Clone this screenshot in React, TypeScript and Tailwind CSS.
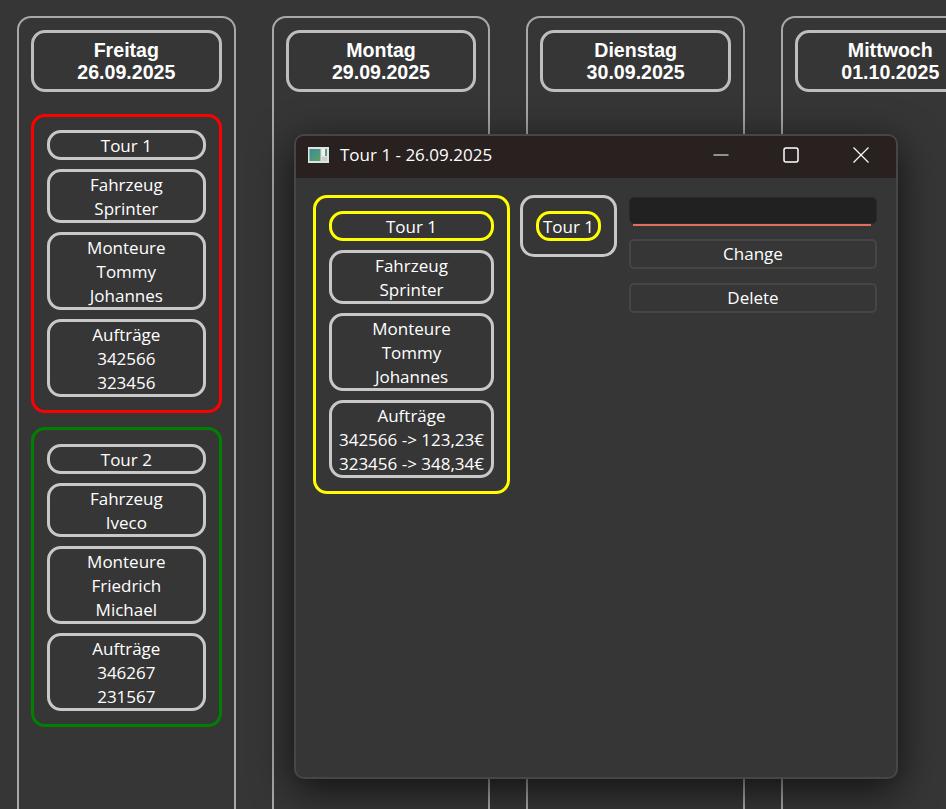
import React from 'react';

const bodyFont = "font-['Open_Sans','Noto_Sans',sans-serif]";

interface TourBoxProps {
  lines: string[];
  accent?: boolean;
  className?: string;
}

const TourBox: React.FC<TourBoxProps> = ({ lines, accent, className = '' }) => (
  <div
    className={`rounded-[14px] border-[3px] text-center text-[17px] leading-[24px] text-white ${accent ? 'border-[#ffff00]' : 'border-[#c8c8c8]'} ${className}`}
  >
    {lines.map((line, idx) => (
      <div key={idx} className="translate-y-[1px] whitespace-nowrap">{line}</div>
    ))}
  </div>
);

interface TourCardProps {
  borderClass: string;
  name: string;
  vehicle: string;
  crew: string[];
  orders: string[];
  accentName?: boolean;
  className?: string;
}

const TourCard: React.FC<TourCardProps> = ({ borderClass, name, vehicle, crew, orders, accentName, className = '' }) => (
  <div className={`flex flex-col gap-[9px] rounded-[14px] border-[3px] p-[13px] ${borderClass} ${className}`}>
    <TourBox lines={[name]} accent={accentName} />
    <TourBox lines={['Fahrzeug', vehicle]} />
    <TourBox lines={['Monteure', ...crew]} />
    <TourBox lines={['Aufträge', ...orders]} />
  </div>
);

interface DayColumnProps {
  day: string;
  date: string;
  children?: React.ReactNode;
}

const DayColumn: React.FC<DayColumnProps> = ({ day, date, children }) => (
  <div className="flex h-[830px] w-[218.67px] shrink-0 flex-col gap-[22px] rounded-[14px] border-2 border-[#a8a8a8] px-[12px] pt-[12px]">
    <div className="flex h-[62px] shrink-0 flex-col items-center justify-center rounded-[14px] border-[3px] border-[#bebebe] font-['Liberation_Sans',sans-serif] text-[19.6px] leading-[22px] font-bold text-white">
      <div>{day}</div>
      <div>{date}</div>
    </div>
    <div className="flex flex-col gap-[14px]">{children}</div>
  </div>
);

const WindowIcon = () => (
  <svg width="22" height="17" viewBox="0 0 22 17" className="shrink-0">
    <defs>
      <linearGradient id="pane" x1="0" y1="0" x2="1" y2="1">
        <stop offset="0" stopColor="#3d8a94" />
        <stop offset="1" stopColor="#5da06a" />
      </linearGradient>
    </defs>
    <rect x="0" y="0" width="21" height="16" fill="#dfe3e3" />
    <rect x="1.5" y="2" width="11" height="12" fill="url(#pane)" />
    <rect x="14" y="2" width="5" height="7" fill="#f2f2f2" />
    <rect x="17" y="2" width="2" height="7" fill="#5aa07a" />
    <rect x="14" y="10" width="5" height="4" fill="#c9cfcf" />
  </svg>
);

const App: React.FC = () => {
  return (
    <div className={`relative h-[809px] w-[946px] overflow-hidden bg-[#363636] ${bodyFont}`}>
      {/* Day columns */}
      <div className="flex gap-[36px] pt-[16px] pl-[17px]">
        <DayColumn day="Freitag" date="26.09.2025">
          <TourCard
            borderClass="border-[#ff0000]"
            name="Tour 1"
            vehicle="Sprinter"
            crew={['Tommy', 'Johannes']}
            orders={['342566', '323456']}
          />
          <TourCard
            className="pt-[14px]"
            borderClass="border-[#008000]"
            name="Tour 2"
            vehicle="Iveco"
            crew={['Friedrich', 'Michael']}
            orders={['346267', '231567']}
          />
        </DayColumn>
        <DayColumn day="Montag" date="29.09.2025" />
        <DayColumn day="Dienstag" date="30.09.2025" />
        <DayColumn day="Mittwoch" date="01.10.2025" />
      </div>

      {/* Tour window */}
      <div className="absolute top-[134px] left-[294px] flex h-[645px] w-[604px] flex-col overflow-hidden rounded-[10px] border-2 border-[#464646] bg-[#363636] shadow-[0_10px_40px_rgba(0,0,0,0.7)]">
        <div className="flex h-[42px] shrink-0 items-center bg-[#292020] pb-[4px] pl-[12px]">
          <WindowIcon />
          <span className="ml-[10px] text-[17px] text-white">Tour 1 - 26.09.2025</span>
          <div className="ml-auto flex items-center text-white">
            <svg width="16" height="16" viewBox="0 0 16 16" className="mr-[54px]">
              <line x1="0.5" y1="8" x2="15.5" y2="8" stroke="currentColor" strokeWidth="1" />
            </svg>
            <svg width="16" height="16" viewBox="0 0 16 16" className="mr-[54px]">
              <rect x="1" y="1" width="14" height="14" rx="2" fill="none" stroke="currentColor" strokeWidth="1.5" />
            </svg>
            <svg width="16" height="16" viewBox="0 0 16 16" className="mr-[27px]">
              <path d="M0.5 0.5 L15.5 15.5 M15.5 0.5 L0.5 15.5" stroke="currentColor" strokeWidth="1.2" fill="none" />
            </svg>
          </div>
        </div>
        <div className="flex items-start pt-[17px] pl-[17px]">
          <TourCard
            className="w-[197px]"
            borderClass="border-[#ffff00]"
            name="Tour 1"
            accentName
            vehicle="Sprinter"
            crew={['Tommy', 'Johannes']}
            orders={['342566 -> 123,23€', '323456 -> 348,34€']}
          />
          <div className="ml-[10px] rounded-[14px] border-[3px] border-[#c8c8c8] p-[13px]">
            <TourBox lines={['Tour 1']} accent className="w-[65px]" />
          </div>
          <div className="ml-[12px] flex w-[248px] flex-col pt-[2px]">
            <div className="h-[27px] rounded-[5px] border border-[#2a2a2a] bg-[#212121]" />
            <div className="mr-[6px] ml-[4px] h-[2px] bg-[#e0705a]" />
            <button className="mt-[13px] h-[30px] rounded-[5px] border-2 border-[#454545] pb-[2px] text-[17px] leading-none text-white">Change</button>
            <button className="mt-[14px] h-[30px] rounded-[5px] border-2 border-[#454545] pb-[1px] text-[17px] leading-none text-white">Delete</button>
          </div>
        </div>
      </div>
    </div>
  );
};

export default App;
